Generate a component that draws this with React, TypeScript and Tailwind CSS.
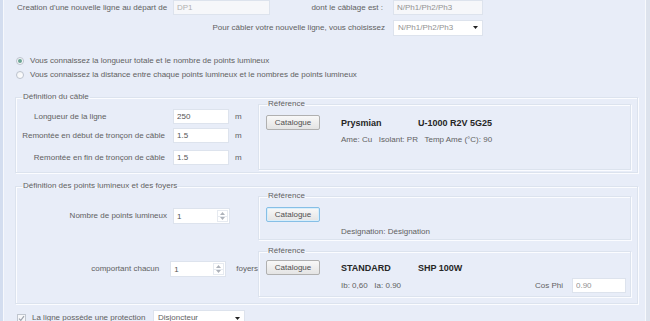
import type { ReactNode } from "react";

const fieldBase =
    "h-[15px] border border-[#dde3ed] px-[3px] text-[8px] leading-none outline-none";
const fieldCls = `${fieldBase} bg-white text-[#555]`;
const groupCls =
    "border border-[#dce3ee] shadow-[inset_1px_1px_0_#fbfcff,1px_1px_0_#fbfcff]";
const legendCls = "h-[8px] px-[1px] leading-[8px]";

function CatalogueButton({ focused = false }: { focused?: boolean }) {
    return (
        <button
            type="button"
            className={`h-[15px] w-[54px] rounded-[2px] border bg-linear-to-b from-[#f8f8f8] to-[#e4e4e4] text-[8px] leading-none text-[#4f4f4f] ${
                focused
                    ? "border-[#86bfe6] shadow-[inset_0_0_0_1px_#d8eefb]"
                    : "border-[#b0b0b0]"
            }`}
        >
            Catalogue
        </button>
    );
}

function Combo({ value, className }: { value: string; className: string }) {
    return (
        <div
            className={`flex h-[16px] items-center justify-between border border-[#dde3ed] bg-white pl-[4px] pr-[4px] ${className}`}
        >
            <span>{value}</span>
            <svg width="5" height="3" viewBox="0 0 5 3">
                <path d="M0 0 L5 0 L2.5 3 Z" fill="#222" />
            </svg>
        </div>
    );
}

function Spin({ value }: { value: string }) {
    return (
        <div className="flex h-[16px] w-[57px] border border-[#dde3ed] bg-white">
            <input
                readOnly
                value={value}
                className="w-0 flex-1 px-[3px] text-[8px] text-[#555] outline-none"
            />
            <div className="my-[1px] mr-[1px] flex w-[11px] flex-col border border-[#e6eaf0]">
                <span className="flex flex-1 items-center justify-center border-b border-[#e6eaf0]">
                    <svg width="5" height="3" viewBox="0 0 5 3">
                        <path d="M0 3 L2.5 0 L5 3 Z" fill="#adb2ba" />
                    </svg>
                </span>
                <span className="flex flex-1 items-center justify-center">
                    <svg width="5" height="3" viewBox="0 0 5 3">
                        <path d="M0 0 L5 0 L2.5 3 Z" fill="#adb2ba" />
                    </svg>
                </span>
            </div>
        </div>
    );
}

function Radio({ checked, children }: { checked?: boolean; children: ReactNode }) {
    return (
        <div className="flex h-[12px] items-center pl-[12px]">
            <span className="flex h-[8px] w-[8px] items-center justify-center rounded-full border border-[#bcc3cd] bg-linear-to-br from-[#f2f3f5] to-white">
                {checked ? <span className="h-[4px] w-[4px] rounded-full bg-[#6aa394]" /> : null}
            </span>
            <span className="ml-[6px]">{children}</span>
        </div>
    );
}

export default function App() {
    return (
        <div className="flex h-[321px] w-[650px] overflow-hidden bg-[#e8edf8] font-['Liberation_Sans',Arial,sans-serif] text-[8px] leading-none text-[#616161]">
            <div className="w-[4px] shrink-0 border-r border-[#f6f8fc] bg-[#d3ddef]" />

            <main className="flex w-[641px] shrink-0 flex-col">
                {/* ligne de départ */}
                <div className="flex h-[15px] items-center">
                    <span className="w-[169px] pl-[13px]">
                        Creation d'une nouvelle ligne au départ de
                    </span>
                    <input
                        readOnly
                        value="DP1"
                        className={`${fieldBase} w-[97px] bg-[#f6f7fa] text-[#b0b0b0]`}
                    />
                    <span className="w-[123px] pr-[10px] text-right">dont le câblage est :</span>
                    <input
                        readOnly
                        value="N/Ph1/Ph2/Ph3"
                        className={`${fieldBase} w-[90px] bg-[#f6f7fa] text-[#929292]`}
                    />
                </div>
                <div className="mt-[5px] flex h-[15px] items-center">
                    <span className="w-[389px] pr-[8px] text-right">
                        Pour câbler votre nouvelle ligne, vous choisissez
                    </span>
                    <Combo value="N/Ph1/Ph2/Ph3" className="w-[90px] text-[#929292]" />
                </div>

                <div className="mt-[20px]">
                    <Radio checked>
                        Vous connaissez la longueur totale et le nombre de points lumineux
                    </Radio>
                </div>
                <div className="mt-[2px]">
                    <Radio>
                        Vous connaissez la distance entre chaque points lumineux et le nombres de
                        points lumineux
                    </Radio>
                </div>

                {/* câble */}
                <fieldset className={`ml-[11px] mt-[12px] w-[623px] ${groupCls}`}>
                    <legend className={`ml-[6px] ${legendCls}`}>Définition du câble</legend>
                    <div className="flex pb-[2px]">
                        <div className="flex w-[242px] flex-col">
                            <div className="mt-[8px] flex h-[15px] items-center">
                                <span className="w-[157px] pl-[18px]">Longueur de la ligne</span>
                                <input readOnly value="250" className={`${fieldCls} w-[56px]`} />
                                <span className="ml-[6px]">m</span>
                            </div>
                            <div className="mt-[4px] flex h-[15px] items-center">
                                <span className="w-[157px] pr-[8px] text-right">
                                    Remontée en début de tronçon de câble
                                </span>
                                <input readOnly value="1.5" className={`${fieldCls} w-[56px]`} />
                                <span className="ml-[6px]">m</span>
                            </div>
                            <div className="mt-[7px] flex h-[15px] items-center">
                                <span className="w-[157px] pr-[8px] text-right">
                                    Remontée en fin de tronçon de câble
                                </span>
                                <input readOnly value="1.5" className={`${fieldCls} w-[56px]`} />
                                <span className="ml-[6px]">m</span>
                            </div>
                        </div>
                        <fieldset className={`-mt-px w-[373px] ${groupCls}`}>
                            <legend className={`ml-[8px] ${legendCls}`}>Référence</legend>
                            <div className="flex h-[61px]">
                                <div className="ml-[7px] mt-[7px]">
                                    <CatalogueButton />
                                </div>
                                <div className="ml-[21px] flex flex-col">
                                    <div className="mt-[10px] flex h-[10px] items-center text-[9px] font-bold text-[#262626]">
                                        <span className="w-[77px]">Prysmian</span>
                                        <span>U-1000 R2V 5G25</span>
                                    </div>
                                    <div className="mt-[7px] flex h-[10px] items-center whitespace-pre">
                                        Ame: Cu   Isolant: PR   Temp Ame (°C): 90
                                    </div>
                                </div>
                            </div>
                        </fieldset>
                    </div>
                </fieldset>

                {/* points lumineux */}
                <fieldset className={`ml-[11px] mt-[9px] w-[623px] ${groupCls}`}>
                    <legend className={`ml-[6px] ${legendCls}`}>
                        Définition des points lumineux et des foyers
                    </legend>
                    <div className="flex flex-col pb-[6px]">
                        <div className="mt-[2px] flex">
                            <div className="w-[242px]">
                                <div className="mt-[16px] flex h-[16px] items-center">
                                    <span className="w-[157px] pr-[6px] text-right">
                                        Nombre de points lumineux
                                    </span>
                                    <Spin value="1" />
                                </div>
                            </div>
                            <fieldset className={`w-[373px] ${groupCls}`}>
                                <legend className={`ml-[8px] ${legendCls}`}>Référence</legend>
                                <div className="flex h-[39px]">
                                    <div className="ml-[7px] mt-[7px]">
                                        <CatalogueButton focused />
                                    </div>
                                    <div className="ml-[21px] mt-[27px] flex h-[10px] items-center">
                                        Designation: Désignation
                                    </div>
                                </div>
                            </fieldset>
                        </div>

                        <div className="mt-[7px] flex">
                            <div className="w-[242px]">
                                <div className="mt-[14px] flex h-[16px] items-center">
                                    <span className="w-[157px] pr-[11px] text-right">
                                        comportant chacun
                                    </span>
                                    <Spin value="1" />
                                    <span className="ml-[10px]">foyers</span>
                                </div>
                            </div>
                            <fieldset className={`w-[373px] ${groupCls}`}>
                                <legend className={`ml-[8px] ${legendCls}`}>Référence</legend>
                                <div className="flex h-[41px]">
                                    <div className="ml-[7px] mt-[5px]">
                                        <CatalogueButton />
                                    </div>
                                    <div className="ml-[21px] flex flex-1 flex-col pr-[4px]">
                                        <div className="mt-[8px] flex h-[10px] items-center text-[9px] font-bold text-[#262626]">
                                            <span className="w-[77px]">STANDARD</span>
                                            <span>SHP 100W</span>
                                        </div>
                                        <div className="mt-[5px] flex h-[15px] items-center">
                                            <span className="flex-1 whitespace-pre">
                                                Ib: 0,60   Ia: 0.90
                                            </span>
                                            <span className="mr-[9px]">Cos Phi</span>
                                            <input
                                                readOnly
                                                value="0.90"
                                                className={`${fieldBase} w-[54px] bg-white text-[#929292]`}
                                            />
                                        </div>
                                    </div>
                                </div>
                            </fieldset>
                        </div>
                    </div>
                </fieldset>

                {/* protection */}
                <div className="mt-[6px] flex h-[16px] items-center pl-[13px]">
                    <span className="flex h-[9px] w-[9px] items-center justify-center border border-[#c0c6cf] bg-[#f6f7f9]">
                        <svg width="7" height="7" viewBox="0 0 7 7">
                            <path
                                d="M1 3.6 L2.8 5.4 L6 1.2"
                                fill="none"
                                stroke="#9aa1ac"
                                strokeWidth="1.1"
                            />
                        </svg>
                    </span>
                    <span className="ml-[6px] w-[121px]">La ligne possède une protection</span>
                    <Combo value="Disjoncteur" className="w-[92px]" />
                </div>
            </main>

            <div className="w-[5px] shrink-0 border-l border-[#f7f9fc] bg-[#dde3ed]" />
        </div>
    );
}
